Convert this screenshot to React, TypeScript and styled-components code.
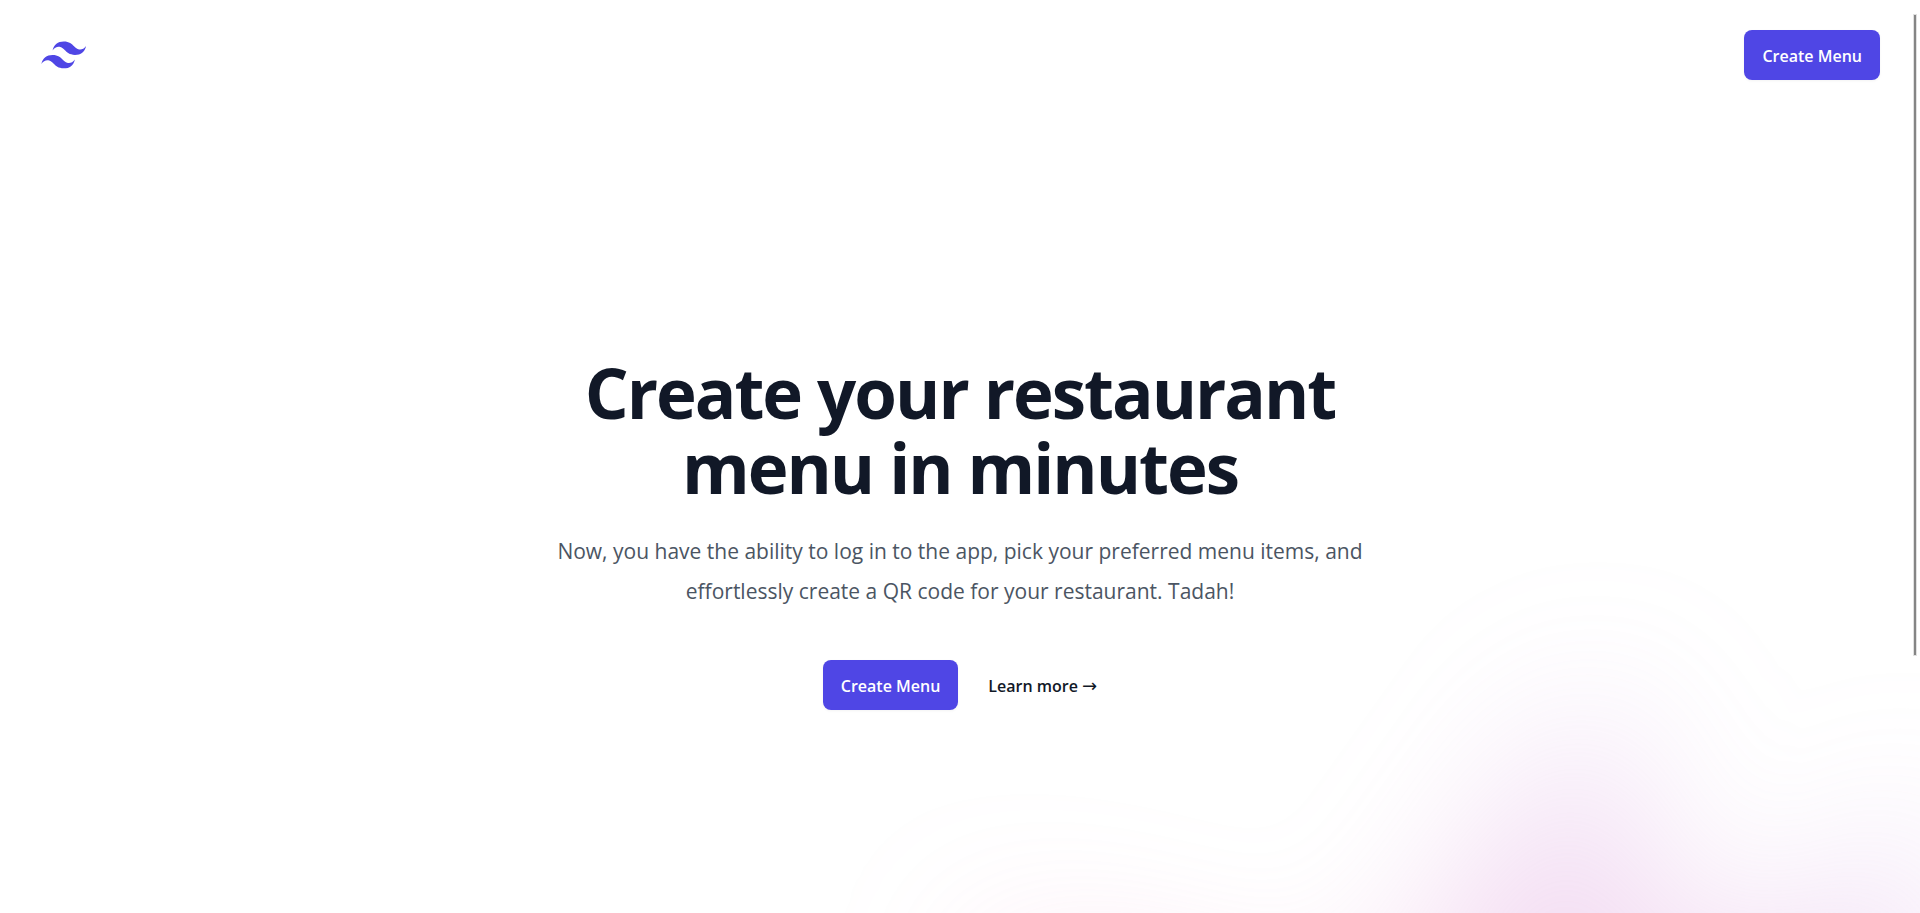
import React from "react";
import styled, { createGlobalStyle } from "styled-components";

const GlobalStyle = createGlobalStyle`
  *, *::before, *::after { box-sizing: border-box; }
  body {
    margin: 0;
    background: #fff;
    color: #111827;
    font-family: "Segoe UI", "Open Sans", "Noto Sans", sans-serif;
  }
`;

const Page = styled.div`
  position: relative;
  isolation: isolate;
  height: 100vh;
  overflow: hidden;
`;

const Nav = styled.nav`
  display: flex;
  align-items: center;
  justify-content: space-between;
  padding: 30px 40px;
`;

const LogoLink = styled.a`
  display: flex;
  color: #4f46e5;
`;

const PrimaryButton = styled.button`
  height: 50px;
  padding: 2px 18px 0;
  border: 0;
  border-radius: 8px;
  background: #4f46e5;
  box-shadow: 0 1px 3px rgba(0, 0, 0, 0.05);
  color: #fff;
  font-family: inherit;
  font-size: 16px;
  font-weight: 600;
  line-height: 25px;
  cursor: pointer;

  &:hover { background: #6366f1; }
`;

const Hero = styled.main`
  display: flex;
  flex-direction: column;
  align-items: center;
  max-width: 840px;
  margin: 0 auto;
  padding-top: 245px;
  text-align: center;
`;

const Title = styled.h1`
  max-width: 800px;
  margin: 0;
  font-size: 69px;
  font-weight: 700;
  line-height: 75px;
  letter-spacing: -2px;
`;

const Lead = styled.p`
  margin: 26px 0 0;
  color: #4b5563;
  font-size: 21px;
  line-height: 40px;
`;

const Actions = styled.div`
  display: flex;
  align-items: center;
  gap: 30px;
  margin-top: 49px;
`;

const TextLink = styled.a`
  padding-top: 2px;
  color: #111827;
  font-size: 16px;
  font-weight: 600;
  line-height: 30px;
  text-decoration: none;
`;

const Arrow = styled.span`
  font-family: "DejaVu Sans", sans-serif;
  font-size: 18px;
  font-weight: 400;
`;

const GlowLayer = styled.div`
  position: absolute;
  z-index: -1;
  top: 390px;
  left: 0;
  right: 0;
  overflow: hidden;
  filter: blur(80px);
  pointer-events: none;
`;

const GlowShape = styled.div`
  width: 1444px;
  aspect-ratio: 1155 / 678;
  margin-left: calc(50% - 2px);
  background: linear-gradient(to top right, #ff80b5, #9089fc);
  opacity: 0.3;
  clip-path: polygon(
    74.1% 44.1%, 100% 61.6%, 97.5% 26.9%, 85.5% 0.1%, 80.7% 2%, 72.5% 32.5%,
    60.2% 62.4%, 52.4% 68.1%, 47.5% 58.3%, 45.2% 34.5%, 27.5% 76.7%,
    0.1% 64.9%, 17.9% 100%, 27.6% 76.8%, 76.1% 97.7%, 74.1% 44.1%
  );
`;

const ScrollThumb = styled.div`
  position: absolute;
  top: 15px;
  right: 4px;
  width: 2px;
  height: 640px;
  background: #858585;
  box-shadow: 0 0 0 1px rgba(0, 0, 0, 0.12);
`;

const Logo = () => (
  <svg width="48" height="40" viewBox="-1.6 -7.8 57.8 48.2" fill="currentColor" aria-hidden="true">
    <path d="M27 0c-7.2 0-11.7 3.6-13.5 10.8 2.7-3.6 5.85-4.95 9.45-4.05 2.054.513 3.522 2.004 5.147 3.653C30.744 13.09 33.808 16.2 40.5 16.2c7.2 0 11.7-3.6 13.5-10.8-2.7 3.6-5.85 4.95-9.45 4.05-2.054-.513-3.522-2.004-5.147-3.653C36.756 3.11 33.692 0 27 0zM13.5 16.2C6.3 16.2 1.8 19.8 0 27c2.7-3.6 5.85-4.95 9.45-4.05 2.054.514 3.522 2.004 5.147 3.653C17.244 29.29 20.308 32.4 27 32.4c7.2 0 11.7-3.6 13.5-10.8-2.7 3.6-5.85 4.95-9.45 4.05-2.054-.513-3.522-2.004-5.147-3.653C23.256 19.31 20.192 16.2 13.5 16.2z" />
  </svg>
);

export default function App() {
  return (
    <Page>
      <GlobalStyle />
      <header>
        <Nav aria-label="Global">
          <LogoLink href="#" aria-label="Home">
            <Logo />
          </LogoLink>
          <PrimaryButton type="button">Create Menu</PrimaryButton>
        </Nav>
      </header>
      <Hero>
        <Title>Create your restaurant menu in minutes</Title>
        <Lead>
          Now, you have the ability to log in to the app, pick your preferred menu items, and
          effortlessly create a QR code for your restaurant. Tadah!
        </Lead>
        <Actions>
          <PrimaryButton type="button">Create Menu</PrimaryButton>
          <TextLink href="#">
            Learn more <Arrow aria-hidden="true">→</Arrow>
          </TextLink>
        </Actions>
      </Hero>
      <GlowLayer aria-hidden="true">
        <GlowShape />
      </GlowLayer>
      <ScrollThumb aria-hidden="true" />
    </Page>
  );
}
